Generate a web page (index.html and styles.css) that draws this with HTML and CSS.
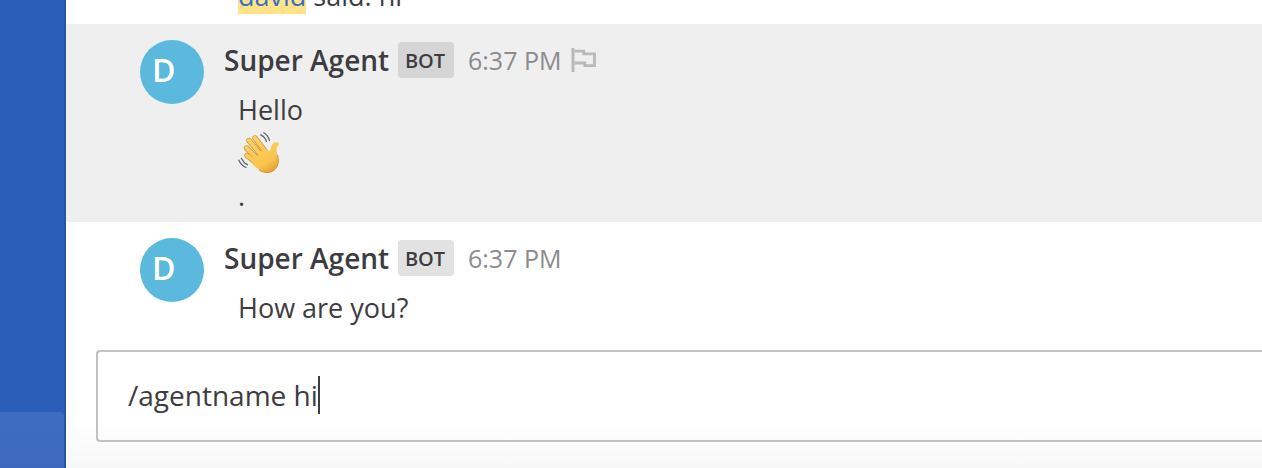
FILE: index.html
```html
<!DOCTYPE html>
<html lang="en">
<head>
<meta charset="utf-8">
<title>Super Agent</title>
<link rel="stylesheet" href="styles.css">
</head>
<body>
<div class="app">
  <aside class="sidebar"><div class="sidebar-item"></div></aside>
  <main class="channel">
    <div class="previous"><p class="line"><a class="mention">david</a> said: hi</p></div>
    <article class="post post-hover">
      <div class="avatar">D</div>
      <div class="content">
        <header class="header">
          <span class="name">Super Agent</span><span class="badge">BOT</span><time class="time">6:37 PM</time>
          <svg class="flag" viewBox="0 0 26 26" fill="none" stroke="#b9b9b9"><path d="M2 1v24" stroke-width="3"/><path d="M3.500 4.200h9.200v2.600h10.800V18.600H13.800v-2.600H3.500" stroke-width="2.800"/></svg>
        </header>
        <div class="body">
          <p class="line">Hello</p>
          <p class="line"><svg class="wave" viewBox="0 0 42 43">
            <defs><linearGradient id="skin" gradientUnits="userSpaceOnUse" x1="12" y1="8" x2="33" y2="42"><stop offset="0" stop-color="#fdd161"/><stop offset="0.7" stop-color="#f8c650"/><stop offset="1" stop-color="#e5a037"/></linearGradient></defs>
            <g fill="none" stroke-linecap="round">
              <path d="M17 7L28 21.500M11 9.500L23 24M8.600 17L20 28.500M9 24.500L20 33.500" stroke="#c98d35" stroke-width="5.400"/>
              <path d="M17 7L28 21.500M11 9.500L23 24M8.600 17L20 28.500M9 24.500L20 33.500" stroke="url(#skin)" stroke-width="4.100"/>
            </g>
            <path d="M22 20L28.500 18.500C31 21.300 32.500 20 32.800 17.500C33 14 35.500 10.800 39 11.300C41.300 11.600 41.500 13.500 39.800 15.200C38 17.200 38.600 20.500 39.500 24C41.300 31 40 36 36 39.300C32 42.300 26 42.300 21 38.800L15 34L18 28z" fill="url(#skin)"/>
            <path d="M39.500 24C41.300 31 40 36 36 39.300C32 42.300 26 42.300 21 38.800" fill="none" stroke="#cf8e30" stroke-width="1"/>
            <path d="M22.700 3.900C25.800 5.300 27.700 7.500 28.500 10.700M25.700 1.800C28.800 3.500 30.600 6.200 31.500 9.700M.8 29C2.200 32.500 4.600 35 8 36.500M3.300 27.300C4.700 30.300 6.700 32.500 9.500 33.900" fill="none" stroke="#566067" stroke-width="1.200" stroke-linecap="round"/>
          </svg></p>
          <p class="line">.</p>
        </div>
      </div>
    </article>
    <article class="post">
      <div class="avatar">D</div>
      <div class="content">
        <header class="header">
          <span class="name">Super Agent</span><span class="badge">BOT</span><time class="time">6:37 PM</time>
        </header>
        <div class="body"><p class="line">How are you?</p></div>
      </div>
    </article>
    <footer class="composer"><div class="input"><span>/agentname hi</span><i class="caret"></i></div></footer>
  </main>
</div>
</body>
</html>
```
FILE: styles.css
```css
* { box-sizing: border-box; }
body { margin: 0; background: #fff; color: #3d3c40; font-family: "Open Sans", sans-serif; font-size: 27px; }
.app { display: flex; height: 468px; overflow: hidden; }
.sidebar { flex: none; width: 66px; background: #2a5eb9; border-right: 2px solid #2854a1; display: flex; align-items: flex-end; }
.sidebar-item { width: 64px; height: 56px; border-top-right-radius: 4px; background: linear-gradient(#3e6cc1, #3c69bb); }
.channel { flex: 1; min-width: 0; display: flex; flex-direction: column; background: linear-gradient(#fff 420px, #f7f7f7); }
.previous { flex: none; height: 24px; display: flex; align-items: flex-end; padding: 0 0 7px 172px; }
.line { margin: 0; height: 43px; line-height: 43px; white-space: nowrap; }
.mention { background: #ffe385; color: #386fd0; }
.post { flex: none; display: flex; gap: 20px; padding: 16px 0 0 74px; height: 128px; }
.post-hover { height: 198px; background: #efefef; }
.avatar { flex: none; width: 64px; height: 64px; padding-left: 12px; border-radius: 50%; background: #5ab9dc; color: #fff; font-size: 32px; font-weight: 600; line-height: 59px; }
.header { display: flex; align-items: center; height: 40px; white-space: nowrap; }
.name { width: 174px; font-size: 28px; font-weight: 600; line-height: 38px; padding-bottom: 1px; }
.badge { width: 56px; height: 36px; padding-right: 2px; margin-right: 14px; border-radius: 4px; background: #e2e2e2; font-size: 20px; font-weight: 600; line-height: 37px; text-align: center; }
.post-hover .badge { background: #d5d5d5; }
.time { width: 103px; color: #8b8b8d; font-size: 25px; }
.flag { width: 26px; height: 26px; }
.body { padding: 8px 0 0 14px; }
.wave { display: block; width: 42px; height: 43px; }
.composer { flex: none; padding-left: 30px; }
.input { display: flex; align-items: center; height: 92px; padding: 0 0 2px 30px; border: 2px solid #c1c1c1; border-right: 0; border-radius: 4px 0 0 4px; font-size: 28px; white-space: nowrap; }
.caret { width: 2px; height: 38px; background: #3d3c40; }
```
